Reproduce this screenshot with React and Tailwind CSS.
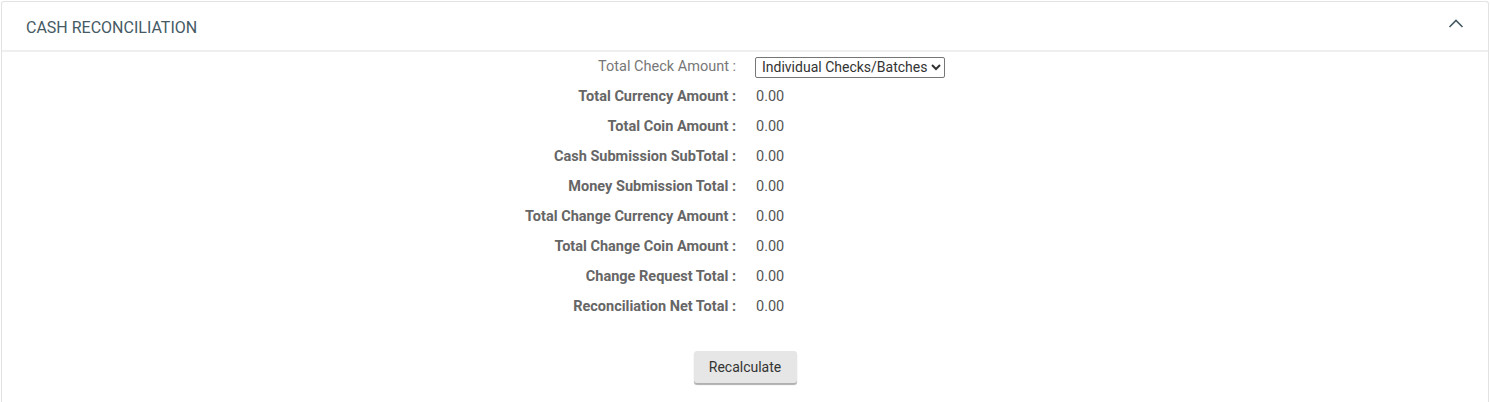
import React, { useState } from 'react';

const rows = [
  { label: 'Total Currency Amount :', value: '0.00' },
  { label: 'Total Coin Amount :', value: '0.00' },
  { label: 'Cash Submission SubTotal :', value: '0.00' },
  { label: 'Money Submission Total :', value: '0.00' },
  { label: 'Total Change Currency Amount :', value: '0.00' },
  { label: 'Total Change Coin Amount :', value: '0.00' },
  { label: 'Change Request Total :', value: '0.00' },
  { label: 'Reconciliation Net Total :', value: '0.00' },
];

export default function App() {
  const [checkMode, setCheckMode] = useState('individual');
  const [open, setOpen] = useState(true);

  return (
    <div className="min-h-[402px] bg-white pt-px px-px font-['Roboto',sans-serif]">
      <div className="border border-[#e3e3e3] border-b-0 rounded-t-[3px] bg-white min-h-[401px]">
        <div className="flex items-center justify-between h-[50px] pt-[4px] pl-[24px] pr-[24px] border-b-2 border-[#efefef]">
          <h2 className="text-[16px] text-[#455a64]">CASH RECONCILIATION</h2>
          <button onClick={() => setOpen(!open)} className="text-[#455a64] mb-[10px]">
            <svg width="16" height="16" viewBox="0 0 16 16" fill="none">
              <path d="M1.5 12 L8 5.5 L14.5 12" stroke="currentColor" strokeWidth="1.6" />
            </svg>
          </button>
        </div>

        {open && (
          <div>
            <div className="grid grid-cols-2 text-[14.5px]">
              <div className="h-[30px] flex items-center justify-end pr-[9px] text-[#777]">
                Total Check Amount :
              </div>
              <div className="h-[30px] flex items-center pl-[10px]">
                <select
                  value={checkMode}
                  onChange={(e) => setCheckMode(e.target.value)}
                  className="h-[21px] w-[190px] border border-[#767676] rounded-[2px] text-[14px] text-[#333] pl-[2px] bg-white"
                >
                  <option value="individual">Individual Checks/Batches</option>
                  <option value="total">Total Only</option>
                </select>
              </div>

              {rows.map((r) => (
                <React.Fragment key={r.label}>
                  <div className="h-[30px] flex items-center justify-end pr-[9px] font-bold text-[#666]">
                    {r.label}
                  </div>
                  <div className="h-[30px] flex items-center pl-[11px] text-[#555]">{r.value}</div>
                </React.Fragment>
              ))}
            </div>

            <div className="flex justify-center mt-[29px]">
              <button className="w-[103px] h-[32px] bg-[#e6e6e6] rounded-[3px] shadow-[0_2px_1px_#b0b0b0] text-[14px] text-[#333]">
                Recalculate
              </button>
            </div>
          </div>
        )}
      </div>
    </div>
  );
}
